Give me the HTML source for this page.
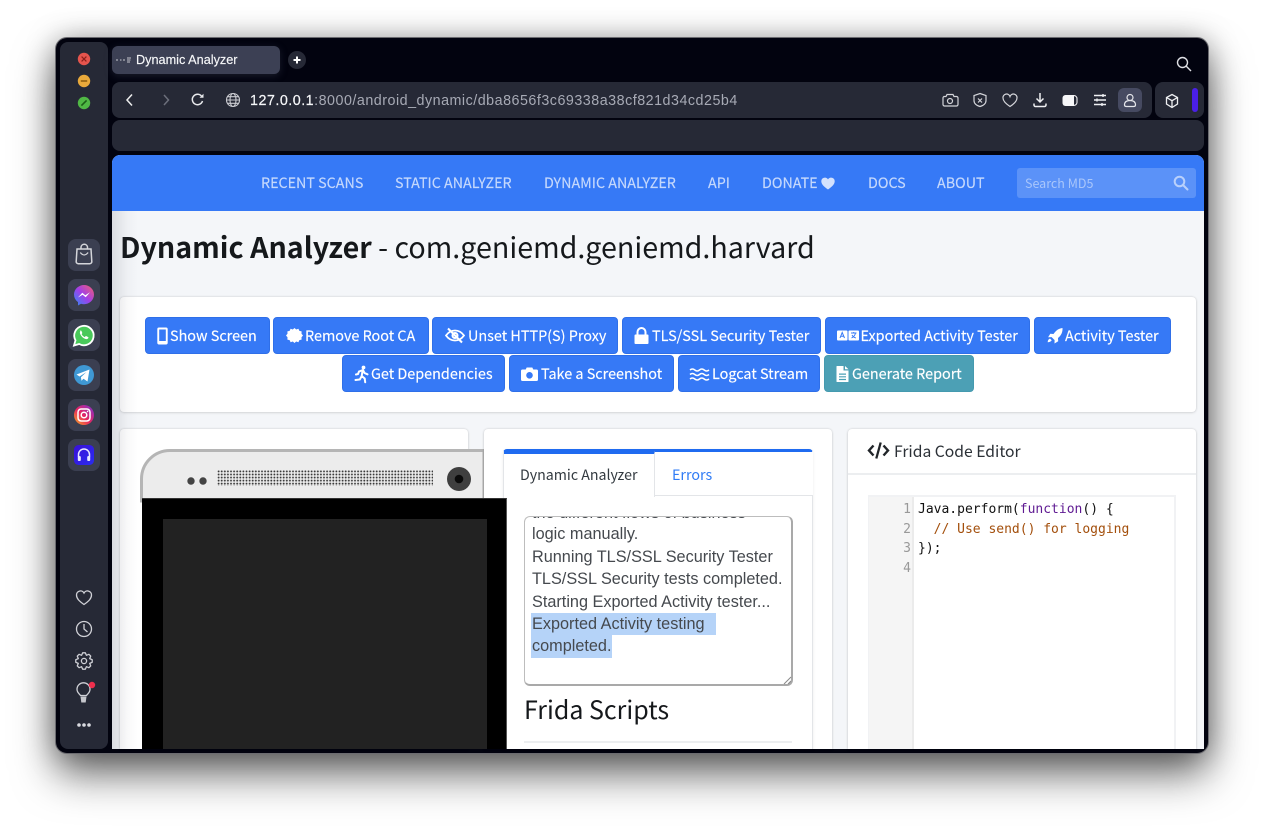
<!DOCTYPE html>
<html><head><meta charset="utf-8"><title>Dynamic Analyzer</title>
<style>
*{box-sizing:border-box}
html,body{margin:0;padding:0;width:1264px;height:827px;background:#fff;overflow:hidden}
.a{position:absolute}
.t{position:absolute;white-space:nowrap;line-height:20px;height:20px;font-family:"Noto Sans CJK SC","Liberation Sans",sans-serif}
#win{position:absolute;left:56px;top:38px;width:1152px;height:715px;border-radius:11px;background:#02030f;box-shadow:0 0 0 1px #6b6b70,0 22px 42px rgba(0,0,0,.55),0 2px 30px rgba(0,0,0,.35)}
.panel{position:absolute;background:#262936;border-radius:8px}
.sb{position:absolute;left:68px;width:32px;height:32px;border-radius:8px;background:#3b3f51}
.nav{position:absolute;top:173px;font-size:14.3px;color:#c5d8fc;white-space:nowrap;line-height:20px;font-family:"Noto Sans CJK SC","Liberation Sans",sans-serif;-webkit-text-stroke:.15px #c5d8fc}
.btn{position:absolute;height:37px;background:#3679f6;border:1px solid #2f6fe8;border-radius:4px}
.btn span{position:absolute;top:8px;font-size:14.4px;color:#fff;white-space:nowrap;line-height:20px;font-family:"Noto Sans CJK SC","Liberation Sans",sans-serif;-webkit-text-stroke:.15px #fff}
.btn svg{position:absolute;top:9px}
.card{position:absolute;background:#fff;border-radius:4px;box-shadow:0 0 2px rgba(0,0,0,.16),0 1px 3px rgba(0,0,0,.08)}
svg{display:block;overflow:visible}
.ln{position:absolute;font:16.25px/22.4px "Liberation Sans",sans-serif;color:#45494e;white-space:pre;height:22.4px}
.code{position:absolute;font:13px/19.5px "DejaVu Sans Mono","Liberation Mono",monospace;white-space:pre;color:#111}
.gn{position:absolute;left:868px;width:43px;text-align:right;font:13px/19.5px "DejaVu Sans Mono","Liberation Mono",monospace;color:#999}
</style></head><body>
<div id="win"></div>

<!-- sidebar -->
<div class="panel" style="left:60px;top:42px;width:48px;height:707px"></div>
<svg class="a" style="left:76px;top:51px" width="16" height="60" viewBox="0 0 16 60">
<circle cx="8" cy="8" r="6.2" fill="#e5544d"/><path d="M5.6 5.6l4.8 4.8M10.4 5.6l-4.8 4.8" stroke="#8c1f1b" stroke-width="1.2"/>
<circle cx="8" cy="30" r="6.2" fill="#e9a93b"/><path d="M4.8 30h6.4" stroke="#8a5a0c" stroke-width="1.5"/>
<circle cx="8" cy="52" r="6.2" fill="#50b845"/><path d="M5.4 54.6l5.2-5.2" stroke="#1c5f18" stroke-width="1.6"/>
</svg>
<div class="sb" style="top:239px"></div><div class="sb" style="top:279px"></div><div class="sb" style="top:319px"></div><div class="sb" style="top:359px"></div><div class="sb" style="top:399px"></div><div class="sb" style="top:439px"></div>
<svg class="a" style="left:68px;top:239px" width="32" height="232" viewBox="0 0 32 232">
<defs>
<linearGradient id="ms" x1="0" y1="1" x2="1" y2="0"><stop offset="0" stop-color="#2d8cf5"/><stop offset=".5" stop-color="#a23ee8"/><stop offset="1" stop-color="#f5606c"/></linearGradient>
<linearGradient id="ig" x1="0" y1="1" x2="1" y2="0"><stop offset="0" stop-color="#f9b020"/><stop offset=".45" stop-color="#e8265e"/><stop offset="1" stop-color="#7a2fd8"/></linearGradient>
<linearGradient id="hp" x1="0" y1="0" x2="1" y2="1"><stop offset="0" stop-color="#3a10d8"/><stop offset="1" stop-color="#2a2cf0"/></linearGradient>
</defs>
<path d="M9 10h14l.8 12.500a2 2 0 0 1-2 2.200H10.200a2 2 0 0 1-2-2.200z" fill="none" stroke="#d4d5da" stroke-width="1.500"/><path d="M13 10V8a3.300 3.300 0 0 1 6.500 0v2" fill="none" stroke="#d4d5da" stroke-width="1.500"/><path d="M12.300 13.500q3.800 5 7.800 0" fill="none" stroke="#d4d5da" stroke-width="1.300"/>
<path d="M16 46a10 9.600 0 0 1 0 19.200c-1 0-2-.1-3-.4l-3 1.700v-3.400a9.500 9.500 0 0 1-4-7.900A10 9.600 0 0 1 16 46z" fill="url(#ms)"/><path d="M10 58.500l4.300-4.700 3 2.500 4.700-3-4.300 5-3.100-2.500z" fill="#fff"/>
<path d="M6 106.500l1.500-5.200a9.700 9.700 0 1 1 3.700 3.700z" fill="#49c95a" stroke="#fff" stroke-width="1.800"/><path d="M12.600 91.800c-.8.700-1 2-.3 3.500 1 2.200 2.800 3.800 4.900 4.600 1.400.5 2.500.1 3.100-.8.300-.5.100-.9-.3-1.100l-1.700-.9c-.4-.2-.7 0-.9.300l-.5.700c-1.400-.5-2.600-1.600-3.300-3l.5-.6c.2-.3.200-.6.100-.9l-.8-1.700c-.2-.4-1.100-.5-1.800-.1z" fill="#fff"/>
<circle cx="16" cy="136" r="10" fill="#3f98d4"/><path d="M8.500 135.500l13-5-2 12-4-2.800-2 2-.6-3.500 5.600-5.200-7 4.500z" fill="#fff"/>
<circle cx="16" cy="176" r="10" fill="url(#ig)"/><rect x="10" y="170" width="12" height="12" rx="3.200" fill="none" stroke="#fff" stroke-width="1.500"/><circle cx="16" cy="176" r="2.800" fill="none" stroke="#fff" stroke-width="1.500"/><circle cx="19.600" cy="172.400" r=".8" fill="#fff"/>
<rect x="6" y="206" width="20" height="20" rx="4.500" fill="url(#hp)"/><path d="M10.500 218v-2.500a5.500 5.500 0 0 1 11 0v2.500" fill="none" stroke="#e8e8ff" stroke-width="1.500"/><rect x="9.800" y="217" width="3" height="5" rx="1.300" fill="#e8e8ff"/><rect x="19.200" y="217" width="3" height="5" rx="1.300" fill="#e8e8ff"/>
</svg>
<svg class="a" style="left:74px;top:587px" width="20" height="146" viewBox="0 0 20 146" fill="none" stroke="#d0d1d7" stroke-width="1.300">
<path d="M10 17.500C5 14 2.500 11.500 2.500 8a4 4 0 0 1 7.500-2 4 4 0 0 1 7.500 2c0 3.500-2.500 6-7.500 9.500z"/>
<circle cx="10" cy="42" r="7.500"/><path d="M10 37v5l3.500 3"/>
<circle cx="10" cy="74" r="2.600"/>
<path transform="translate(10 74)" stroke-linejoin="round" d="M8.200-1.300L8.200 1.300 5.700 2.400 6.700 4.900 4.900 6.700 2.400 5.700 1.300 8.200-1.300 8.200-2.400 5.700-4.900 6.700-6.700 4.900-5.700 2.400-8.200 1.300-8.200-1.300-5.700-2.400-6.700-4.900-4.900-6.700-2.400-5.700-1.300-8.200 1.300-8.200 2.400-5.700 4.900-6.700 6.700-4.900 5.700-2.400z"/>
<path d="M6.500 108.500c-1-1.700-3.500-2.700-3.500-6.200a6.500 6.500 0 0 1 13 0c0 3.500-2.500 4.500-3.500 6.200z"/><path d="M6.500 109.500h6l-.8 6h-4.400z" fill="#c5c6cc" stroke="none"/>
<circle cx="18" cy="98" r="3.200" fill="#ee2f4d" stroke="none"/>
<circle cx="5" cy="138" r="1.800" fill="#d9dae0" stroke="none"/><circle cx="10" cy="138" r="1.800" fill="#d9dae0" stroke="none"/><circle cx="15" cy="138" r="1.800" fill="#d9dae0" stroke="none"/>
</svg>

<!-- tab strip -->
<div class="a" style="left:112px;top:46px;width:168px;height:28px;border-radius:6px;background:#3c4054;box-shadow:0 2px 8px rgba(60,64,84,.4)"></div>
<svg class="a" style="left:115px;top:56px" width="18" height="8" viewBox="0 0 18 8"><path d="M1 4h2M5 4h1.500M8 4h2" stroke="#9a9ca6" stroke-width="1.500"/><path d="M12 2h4M12 4h3.500M12 6h3" stroke="#c4c5cc" stroke-width="1"/></svg>
<div class="t" style="left:136px;top:50px;font-size:12.7px;color:#f6f7f9;font-family:'Liberation Sans',sans-serif;-webkit-text-stroke:.15px #f6f7f9">Dynamic Analyzer</div>
<div class="a" style="left:288px;top:51px;width:18px;height:18px;border-radius:50%;background:#262936"></div>
<svg class="a" style="left:288px;top:51px" width="18" height="18"><path d="M9 5.500v7M5.500 9h7" stroke="#fff" stroke-width="2"/></svg>
<svg class="a" style="left:1175px;top:55px" width="18" height="18" viewBox="0 0 18 18" fill="none" stroke="#dfe0e5" stroke-width="1.400"><circle cx="7.500" cy="7.500" r="5"/><path d="M11.300 11.300l4.700 4.700"/></svg>

<!-- address bar -->
<div class="panel" style="left:112px;top:82px;width:1040px;height:36px"></div>
<div class="panel" style="left:1155px;top:82px;width:49px;height:36px"></div>
<div class="panel" style="left:112px;top:120px;width:1092px;height:31px"></div>
<svg class="a" style="left:120px;top:90px" width="120" height="20" viewBox="0 0 120 20" fill="none" stroke-width="1.500">
<path d="M12 4.500L7 10l5 5.500" stroke="#eceded"/><path d="M44 5l4.500 5-4.500 5" stroke="#6c6f7b"/>
<path d="M81.800 6.500A5.200 5.200 0 1 0 82.500 11" stroke="#e8e9ec"/><path d="M83.500 3.800v4h-4z" fill="#e8e9ec" stroke="none"/>
<g stroke="#c9cad0" stroke-width="1.100"><circle cx="113" cy="10" r="6.500"/><ellipse cx="113" cy="10" rx="3" ry="6.500"/><path d="M106.500 10h13M107.500 6.700h11M107.500 13.300h11"/></g>
</svg>
<div class="t" style="left:250px;top:91px;font-size:14.3px;font-family:'Liberation Sans',sans-serif;color:#a7aab5;letter-spacing:.5px"><span style="color:#f6f7f9;-webkit-text-stroke:.2px #f6f7f9">127.0.0.1</span>:8000/android_dynamic/dba8656f3c69338a38cf821d34cd25b4</div>
<div class="a" style="left:1118px;top:88px;width:24px;height:24px;border-radius:6px;background:#464a61"></div>
<svg class="a" style="left:940px;top:90px" width="200" height="20" viewBox="0 0 200 20" fill="none" stroke="#d4d5da" stroke-width="1.200">
<path d="M3.500 6.500h2.500l1-2h6l1 2h2.500a1.500 1.500 0 0 1 1.500 1.500v6.500a1.500 1.500 0 0 1-1.500 1.500h-12a1.500 1.500 0 0 1-1.500-1.500V8a1.500 1.500 0 0 1 1.500-1.500z"/><circle cx="10" cy="11" r="2.500"/>
<path d="M40 3.500l6 2v5c0 3-2.500 5-6 6-3.500-1-6-3-6-6v-5z"/><path d="M38 8.500l4 4M42 8.500l-4 4"/>
<path d="M70 16.500c-4.500-3-7-5.500-7-8.500a3.600 3.600 0 0 1 7-1.500 3.600 3.600 0 0 1 7 1.500c0 3-2.500 5.500-7 8.500z"/>
<path d="M100 3v9M96.500 8.500l3.500 3.500 3.500-3.500M94 13.500v1.500a1.500 1.500 0 0 0 1.500 1.500h9a1.500 1.500 0 0 0 1.500-1.500v-1.500" stroke="#eeeff2" stroke-width="1.500"/>
<path d="M125.500 5h8.500v11h-8.500a3 3 0 0 1-3-3V8a3 3 0 0 1 3-3z" fill="#f6f6f8" stroke="none"/><path d="M134 5.600a3 3 0 0 1 3 3v3.800a3 3 0 0 1-3 3" stroke="#f0f0f3" stroke-width="1.100"/>
<path d="M154 5.500h12M154 10h12M154 14.500h12" stroke="#eeeff2" stroke-width="1.400"/><path d="M163 4v3M157 8.500v3M162 13v3" stroke="#eeeff2" stroke-width="1.400"/>
<circle cx="190" cy="7.500" r="3" stroke="#e4e5ea"/><path d="M184.500 15c0-3 2-4.500 5.500-4.500s5.500 1.500 5.500 4.500c0 1-1 1.500-2 1.500h-7c-1 0-2-.5-2-1.500z" stroke="#e4e5ea"/>
</svg>
<svg class="a" style="left:1163px;top:92px" width="18" height="18" viewBox="0 0 18 18" fill="none" stroke="#eeeff2" stroke-width="1.300"><path d="M9 2.500l5.500 3v6.500L9 15.500 3.500 12V5.500zM3.500 5.500L9 8.700l5.500-3.200M9 8.700v6.800"/></svg>
<div class="a" style="left:1192px;top:88px;width:6px;height:24px;border-radius:3px;background:#4a1fe8"></div>

<!-- content -->
<div class="a" style="left:112px;top:155px;width:1092px;height:594px;background:#f4f6f9;border-radius:8px 8px 0 0;overflow:hidden">
<div class="a" style="left:0;top:0;width:1092px;height:56px;background:#3679f6"></div>
</div>
<div class="nav" style="left:261px">RECENT SCANS</div>
<div class="nav" style="left:395px">STATIC ANALYZER</div>
<div class="nav" style="left:544px">DYNAMIC ANALYZER</div>
<div class="nav" style="left:708px">API</div>
<div class="nav" style="left:762px">DONATE</div>
<svg class="a" style="left:821px;top:177px" width="14" height="13" viewBox="0 0 14 13"><path d="M7 12.500C2.500 9.300.3 7 .3 4.200A3.600 3.600 0 0 1 7 2.400a3.600 3.600 0 0 1 6.700 1.800C13.700 7 11.500 9.300 7 12.500z" fill="#d3e1fd"/></svg>
<div class="nav" style="left:868px">DOCS</div>
<div class="nav" style="left:937px">ABOUT</div>
<div class="a" style="left:1017px;top:168px;width:179px;height:30px;background:#5b92f8;border-radius:3px"></div>
<div class="t" style="left:1025px;top:173px;font-size:12.5px;color:#a9c6fb">Search MD5</div>
<svg class="a" style="left:1173px;top:175px" width="16" height="16" viewBox="0 0 16 16" fill="none" stroke="#b9d0fb" stroke-width="2"><circle cx="6.500" cy="6.500" r="4.800"/><path d="M10 10l4.500 4.500" stroke-linecap="round"/></svg>

<div class="t" style="left:120px;top:226px;height:42px;line-height:42px;font-size:28.65px;color:#15181b"><b style="font-weight:700">Dynamic Analyzer</b> - com.geniemd.geniemd.harvard</div>

<!-- action card -->
<div class="card" style="left:120px;top:297px;width:1076px;height:115px"></div>
<div class="btn" style="left:145px;top:317px;width:125px"><svg style="left:11px" width="11" height="18" viewBox="0 0 11 18"><path fill="#fff" fill-rule="evenodd" d="M2 .5h7A1.700 1.700 0 0 1 10.700 2.200v13.600A1.700 1.700 0 0 1 9 17.500H2A1.700 1.700 0 0 1 .3 15.800V2.200A1.700 1.700 0 0 1 2 .5zm.2 2v11.500h6.600V2.500z"/></svg><span style="left:24px">Show Screen</span></div>
<div class="btn" style="left:273px;top:317px;width:156px"><svg style="left:12px" width="17" height="18" viewBox="0 0 17 18"><path fill="#fff" d="M8.500 1l1.700 1.500 2.200-.7 1 2.100 2.200.5-.1 2.300 1.500 1.800-1.500 1.800.1 2.300-2.200.5-1 2.100-2.200-.7L8.500 16l-1.700-1.500-2.200.7-1-2.100-2.200-.5.100-2.300L0 8.500l1.500-1.800-.1-2.300 2.200-.5 1-2.100 2.200.7z"/></svg><span style="left:31px">Remove Root CA</span></div>
<div class="btn" style="left:432px;top:317px;width:186px"><svg style="left:12px" width="20" height="18" viewBox="0 0 20 18" fill="none" stroke="#fff" stroke-width="2"><path d="M1 8.500C3.500 5 6.500 3.500 10 3.500s6.500 1.500 9 5c-2.500 3.500-5.500 5-9 5s-6.500-1.500-9-5z" stroke-width="1.800"/><circle cx="10" cy="8.500" r="2.500"/><path d="M3 1.500l14 14" stroke-width="2"/></svg><span style="left:35px">Unset HTTP(S) Proxy</span></div>
<div class="btn" style="left:622px;top:317px;width:199px"><svg style="left:11px" width="15" height="18" viewBox="0 0 15 18"><path fill="#fff" d="M1.500 7.500h1V5a5 5 0 0 1 10 0v2.500h1a1 1 0 0 1 1 1v7.500a1 1 0 0 1-1 1h-12a1 1 0 0 1-1-1V8.500a1 1 0 0 1 1-1zm3 0h6V5a3 3 0 0 0-6 0z"/></svg><span style="left:29px">TLS/SSL Security Tester</span></div>
<div class="btn" style="left:825px;top:317px;width:205px"><svg style="left:11px" width="22" height="18" viewBox="0 0 22 18"><rect x="0" y="3.500" width="10.500" height="10" rx="1" fill="#fff"/><rect x="11.500" y="3.500" width="10.500" height="10" rx="1" fill="#fff"/><path d="M3 11l2.200-5.500L7.500 11M4 9.300h2.500" stroke="#3679f6" fill="none" stroke-width="1"/><path d="M14 6h5.500M16.700 5v1M18.500 6c-.5 2.500-2 4-4 5M15 8c.8 1.500 2 2.500 4 3" stroke="#3679f6" fill="none" stroke-width=".9"/></svg><span style="left:34.5px">Exported Activity Tester</span></div>
<div class="btn" style="left:1034px;top:317px;width:137px"><svg style="left:11px" width="17" height="18" viewBox="0 0 17 18"><path fill="#fff" d="M16.500 1c.3 4-1.300 7.500-4.500 10l.2 3.300-3.700 2.200.1-3.400-3-3-3.500.2L4.300 6.700 7.500 7C10 3.500 12.800 1.300 16.500 1zM4 11.500l1.700 1.700c-.7 1.300-2.400 2-4 2 0-1.700.8-3.100 2.300-3.700z"/></svg><span style="left:30px">Activity Tester</span></div>

<div class="btn" style="left:342px;top:355px;width:163px"><svg style="left:11px" width="16" height="18" viewBox="0 0 16 18"><circle cx="9.500" cy="2.500" r="1.900" fill="#fff"/><path d="M5 6.500l4-1.500 1.500 3 3 1.300M8.500 6L7.700 11l3 2.500.5 3.800M7.500 11.500l-1.700 3-4.300.5M5 6.500l-1 2.500-2 .5" fill="none" stroke="#fff" stroke-width="2" stroke-linecap="round"/></svg><span style="left:28px">Get Dependencies</span></div>
<div class="btn" style="left:509px;top:355px;width:165px"><svg style="left:11px" width="17" height="18" viewBox="0 0 17 18"><path fill="#fff" fill-rule="evenodd" d="M1.500 4.500h3.200l1-2h5.600l1 2h3.200a1.500 1.500 0 0 1 1.500 1.500v8.500a1.500 1.500 0 0 1-1.500 1.500h-14A1.500 1.500 0 0 1 0 14.500V6a1.500 1.500 0 0 1 1.500-1.500zm7 2.500a3.300 3.300 0 1 0 0 6.600 3.300 3.300 0 0 0 0-6.600z"/></svg><span style="left:31px">Take a Screenshot</span></div>
<div class="btn" style="left:678px;top:355px;width:142px"><svg style="left:11px" width="19" height="18" viewBox="0 0 19 18" fill="none" stroke="#fff" stroke-width="1.500"><path d="M0 5q2.400-2 4.800 0t4.700 0 4.700 0 4.800 0M0 9.500q2.400-2 4.800 0t4.700 0 4.700 0 4.800 0M0 14q2.400-2 4.800 0t4.700 0 4.700 0 4.800 0"/></svg><span style="left:33px">Logcat Stream</span></div>
<div class="btn" style="left:824px;top:355px;width:150px;background:#4ca0b5;border-color:#459aaf"><svg style="left:11px" width="13" height="18" viewBox="0 0 13 18"><path fill="#fff" fill-rule="evenodd" d="M1 1h6.500v4.500H12.500v11a.5.500 0 0 1-.5.5H1a.5.500 0 0 1-.5-.5v-15A.5.500 0 0 1 1 1zm8 0l3.500 3.200H9zM3 8.500v1.200h7V8.500zm0 2.700v1.200h7v-1.200zm0 2.700v1.200h7v-1.200z"/></svg><span style="left:27px">Generate Report</span></div>

<!-- cards -->
<div class="card" style="left:120px;top:429px;width:348px;height:320px;border-radius:4px 4px 0 0"></div>
<svg class="a" style="left:140px;top:449px" width="344" height="52" viewBox="0 0 344 52">
<defs><pattern id="sp" x="0" y="0" width="3.100" height="3.050" patternUnits="userSpaceOnUse"><circle cx="1.100" cy="1.100" r=".95" fill="#3a3a3a"/></pattern></defs>
<path d="M1.500 52V30A28.500 28.500 0 0 1 30 1.500H344V52z" fill="#ececec" stroke="#b5b5b5" stroke-width="3"/>
<circle cx="51" cy="32" r="3.700" fill="#444"/><circle cx="63" cy="32" r="3.700" fill="#444"/>
<rect x="77" y="21" width="216" height="16" fill="url(#sp)"/>
<circle cx="319" cy="30" r="12" fill="#3f3f3f"/><circle cx="319" cy="30" r="4.300" fill="#0a0a0a"/>
</svg>
<div class="card" style="left:484px;top:429px;width:348px;height:320px;border-radius:4px 4px 0 0"></div>

<!-- tabs -->
<div class="a" style="left:503px;top:449px;width:310px;height:300px;background:#fff;border:1px solid #e3e5e8;border-top:3px solid #1f6bf0;border-bottom:0;border-radius:4px 4px 0 0;box-shadow:0 1px 3px rgba(0,0,0,.08)"></div>
<div class="a" style="left:504px;top:452px;width:309px;height:44px;background:#fff;border-bottom:1px solid #e3e5e8"></div>
<div class="a" style="left:504px;top:451px;width:151px;height:46px;background:#fff;border-top:3px solid #1f6bf0;border-right:1px solid #e3e5e8"></div>
<div class="t" style="left:520px;top:465px;font-size:14.2px;color:#333a40">Dynamic Analyzer</div>
<div class="t" style="left:672px;top:465px;font-size:14.3px;color:#2f7bf5">Errors</div>

<!-- phone screen (overlaps the tab card) -->
<div class="a" style="left:142px;top:498px;width:365px;height:251px;background:#000;border-top:1px solid #333;border-right:1px solid #555"></div>
<div class="a" style="left:163px;top:519px;width:324px;height:230px;background:#222"></div>

<div class="a" style="left:524px;top:516px;width:269px;height:170px;background:#fff;border:1px solid #bdbdbd;border-right:2px solid #a9a9a9;border-bottom:2px solid #a9a9a9;border-radius:6px"></div>
<div class="a" style="left:525px;top:517px;width:260px;height:166px;overflow:hidden">
<div class="ln" style="left:7px;top:-15.4px">the different flows of business</div>
<div class="ln" style="left:7px;top:6.4px">logic manually.</div>
<div class="ln" style="left:7px;top:28.8px">Running TLS/SSL Security Tester</div>
<div class="ln" style="left:7px;top:51.2px">TLS/SSL Security tests completed.</div>
<div class="ln" style="left:7px;top:73.6px">Starting Exported Activity tester...</div>
<div class="ln" style="left:6px;padding-left:1px;top:96px;background:#b5d3f8;width:185px">Exported Activity testing </div>
<div class="ln" style="left:6px;padding-left:1px;top:118.4px;background:#b5d3f8;width:81px">completed.</div>
</div>
<svg class="a" style="left:782px;top:675px" width="10" height="10"><path d="M2 9l7-7M6 9l3-3" stroke="#8a8a8a" stroke-width="1"/></svg>
<div class="t" style="left:524px;top:689px;height:40px;line-height:40px;font-size:25px;color:#15181b">Frida Scripts</div>
<div class="a" style="left:524px;top:741px;width:268px;height:2px;background:#eceef0"></div>

<div class="card" style="left:848px;top:429px;width:348px;height:320px;border-radius:4px 4px 0 0"></div>
<div class="a" style="left:848px;top:473px;width:348px;height:2px;background:#eceef0"></div>
<svg class="a" style="left:867px;top:441px" width="23" height="19" viewBox="0 0 23 19" fill="none" stroke="#212529" stroke-width="2.400"><path d="M6.500 4.500L2 9.500l4.500 5M16.500 4.500l4.500 5-4.500 5"/><path d="M13.700 1.500L9.300 17.500" stroke-width="2.300"/></svg>
<div class="t" style="left:894px;top:441px;font-size:15.7px;color:#2b3036">Frida Code Editor</div>
<div class="a" style="left:868px;top:495px;width:308px;height:254px;background:#fff;border:2px solid #f1f2f4;border-bottom:0"></div>
<div class="a" style="left:869px;top:497px;width:45px;height:252px;background:#f5f5f5;border-right:2px solid #ebebeb"></div>
<div class="gn" style="top:500px">1</div>
<div class="gn" style="top:519.5px">2</div>
<div class="gn" style="top:539px">3</div>
<div class="gn" style="top:558.5px">4</div>
<div class="code" style="left:918px;top:500px">Java.perform(<span style="color:#5f1a92">function</span>() {</div>
<div class="code" style="left:918px;top:519.5px;color:#a34f0c">  // Use send() for logging</div>
<div class="code" style="left:918px;top:539px">});</div>

<!-- left shade over content -->
<div class="a" style="left:112px;top:211px;width:26px;height:538px;background:linear-gradient(90deg,rgba(60,60,80,.14),rgba(60,60,80,.03) 60%,rgba(60,60,80,0))"></div>
</body></html>
